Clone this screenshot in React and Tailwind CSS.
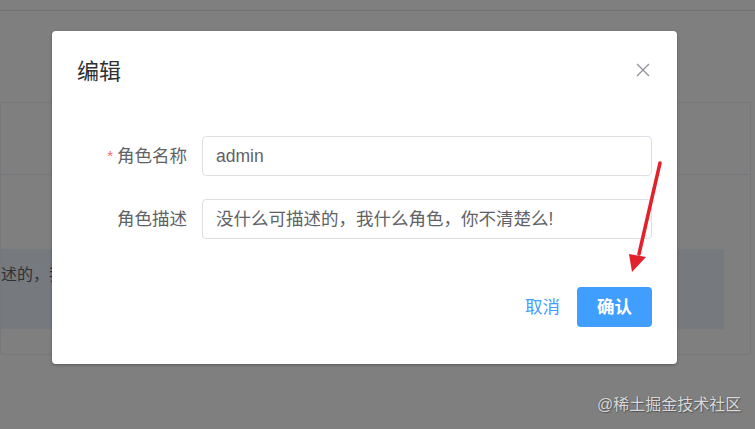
import React from "react";

const cjk = "font-['Liberation_Sans','Noto_Sans_CJK_SC',sans-serif]";

function FormRow({ label, value, required }) {
  return (
    <div className="flex items-center">
      <label className="w-[150px] pr-[15px] flex justify-end items-center text-[17.5px] text-[#606266] leading-[40px]">
        {required && <span className="text-[#f56c6c] mr-[4px] text-[15px]">*</span>}
        {label}
      </label>
      <div className="w-[450px] h-[40px] border border-[#dcdfe6] rounded-[4px] px-[13px] flex items-center text-[17.5px] text-[#606266] bg-white">
        {value}
      </div>
    </div>
  );
}

export default function App() {
  return (
    <div className={`relative w-[755px] h-[429px] overflow-hidden bg-white ${cjk}`}>
      {/* page behind the modal */}
      <div className="h-[11px] border-b border-[#e4e7ed]" />
      <div className="mt-[91px] w-[751px] h-[253px] border border-[#ebeef5] rounded-[2px] flex flex-col">
        <div className="h-[72px] border-b border-[#ebeef5]" />
        <div className="h-[74px]" />
        <div className="w-[723px] h-[80px] bg-[#ecf5ff] pt-[15px] text-[16px] leading-[22px] text-[#606266]">
          述的，我什么角色，你不清楚么!
        </div>
      </div>

      {/* overlay */}
      <div className="absolute inset-0 bg-black/50" />

      {/* dialog */}
      <div className="absolute left-[52px] top-[31px] w-[625px] bg-white rounded-[4px] shadow-[0_1px_3px_rgba(0,0,0,0.3)] pb-[37px]">
        <div className="flex items-center justify-between pt-[26px] pl-[25px] pr-[27px]">
          <span className="text-[22px] leading-[30px] text-[#303133]">编辑</span>
          <svg width="14" height="14" viewBox="0 0 14 14" className="mt-[-4px]">
            <path d="M1 1L13 13M13 1L1 13" stroke="#909399" strokeWidth="1.3" fill="none" />
          </svg>
        </div>
        <div className="mt-[49px] flex flex-col gap-[23px]">
          <FormRow label="角色名称" value="admin" required />
          <FormRow label="角色描述" value="没什么可描述的，我什么角色，你不清楚么!" />
        </div>
        <div className="mt-[48px] pr-[25px] flex justify-end items-center gap-[17px]">
          <button className="text-[17.5px] text-[#409eff] leading-[40px]">取消</button>
          <button className="w-[75px] h-[40px] rounded-[4px] bg-[#409eff] text-white text-[17.5px] font-bold">
            确认
          </button>
        </div>
      </div>

      {/* annotation arrow */}
      <svg className="absolute inset-0 pointer-events-none" width="755" height="429" viewBox="0 0 755 429">
        <path d="M660 163 L639 254" stroke="#e3212b" strokeWidth="3.5" strokeLinecap="round" fill="none" />
        <polygon points="632,272 629,254 646,257" fill="#e3212b" />
      </svg>

      {/* watermark */}
      <div className="absolute left-[597px] top-[394px] text-[16px] leading-[22px] text-[#d9d9d9] [text-shadow:0_0_1px_#555,1px_1px_1px_#555]">
        @稀土掘金技术社区
      </div>
    </div>
  );
}
